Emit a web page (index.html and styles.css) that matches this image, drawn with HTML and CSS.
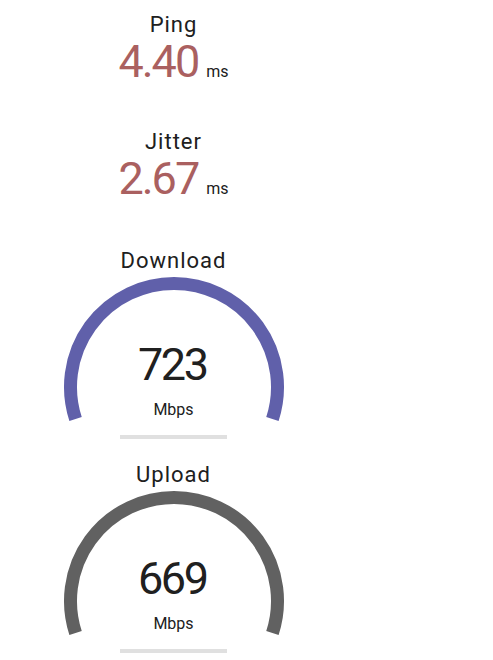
FILE: index.html
```html
<!DOCTYPE html>
<html lang="en">
<head>
    <meta charset="UTF-8">
    <meta name="viewport" content="width=device-width, initial-scale=1.0">
    <title>Speed Test</title>
    <link rel="stylesheet" href="styles.css">
</head>
<body>
    <div class="testGroup">
        <div class="metric">
            <div class="testName">Ping</div>
            <div class="meterText ping">4.40<span class="unit">ms</span></div>
        </div>

        <div class="metric">
            <div class="testName">Jitter</div>
            <div class="meterText ping">2.67<span class="unit">ms</span></div>
        </div>

        <div class="gauge first">
            <div class="testName">Download</div>
            <div class="dial">
                <svg class="arc" width="230" height="150" viewBox="0 0 230 150">
                    <path d="M 16.57 144.98 A 103.5 103.5 0 1 1 213.43 144.98" fill="none" stroke="#6060aa" stroke-width="13"/>
                </svg>
                <div class="speed">723</div>
                <div class="speedUnit">Mbps</div>
                <div class="progress"></div>
            </div>
        </div>

        <div class="gauge">
            <div class="testName">Upload</div>
            <div class="dial">
                <svg class="arc" width="230" height="150" viewBox="0 0 230 150">
                    <path d="M 16.57 144.98 A 103.5 103.5 0 1 1 213.43 144.98" fill="none" stroke="#616161" stroke-width="13"/>
                </svg>
                <div class="speed">669</div>
                <div class="speedUnit">Mbps</div>
                <div class="progress"></div>
            </div>
        </div>
    </div>
</body>
</html>
```

FILE: styles.css
```css
body { margin: 0; background: #ffffff; color: #202020; font-family: Roboto, "Open Sans", sans-serif; }
.testGroup { width: 347px; display: flex; flex-direction: column; align-items: center; text-align: center; }
.metric { width: 100%; height: 117px; padding-top: 12px; box-sizing: border-box; }
.testName { font-size: 22px; line-height: 26px; letter-spacing: 1px; }
.meterText { font-size: 45px; line-height: 48px; letter-spacing: -2px; }
.meterText.ping { color: #aa6060; }
.unit { font-size: 16px; letter-spacing: 0; color: #202020; margin-left: 8px; }
.gauge { width: 100%; height: 214px; padding-top: 12px; box-sizing: border-box; display: flex; flex-direction: column; align-items: center; }
.gauge.first { margin-top: 2px; }
.dial { position: relative; width: 230px; padding-top: 67px; display: flex; flex-direction: column; align-items: center; }
.arc { position: absolute; top: 0; left: 0; }
.speed { position: relative; font-size: 45px; line-height: 48px; letter-spacing: -2.5px; text-indent: -2.5px; }
.speedUnit { position: relative; font-size: 16px; line-height: 20px; margin-top: 11px; }
.progress { width: 107px; height: 4px; margin-top: 15px; background: #e0e0e0; }
```
